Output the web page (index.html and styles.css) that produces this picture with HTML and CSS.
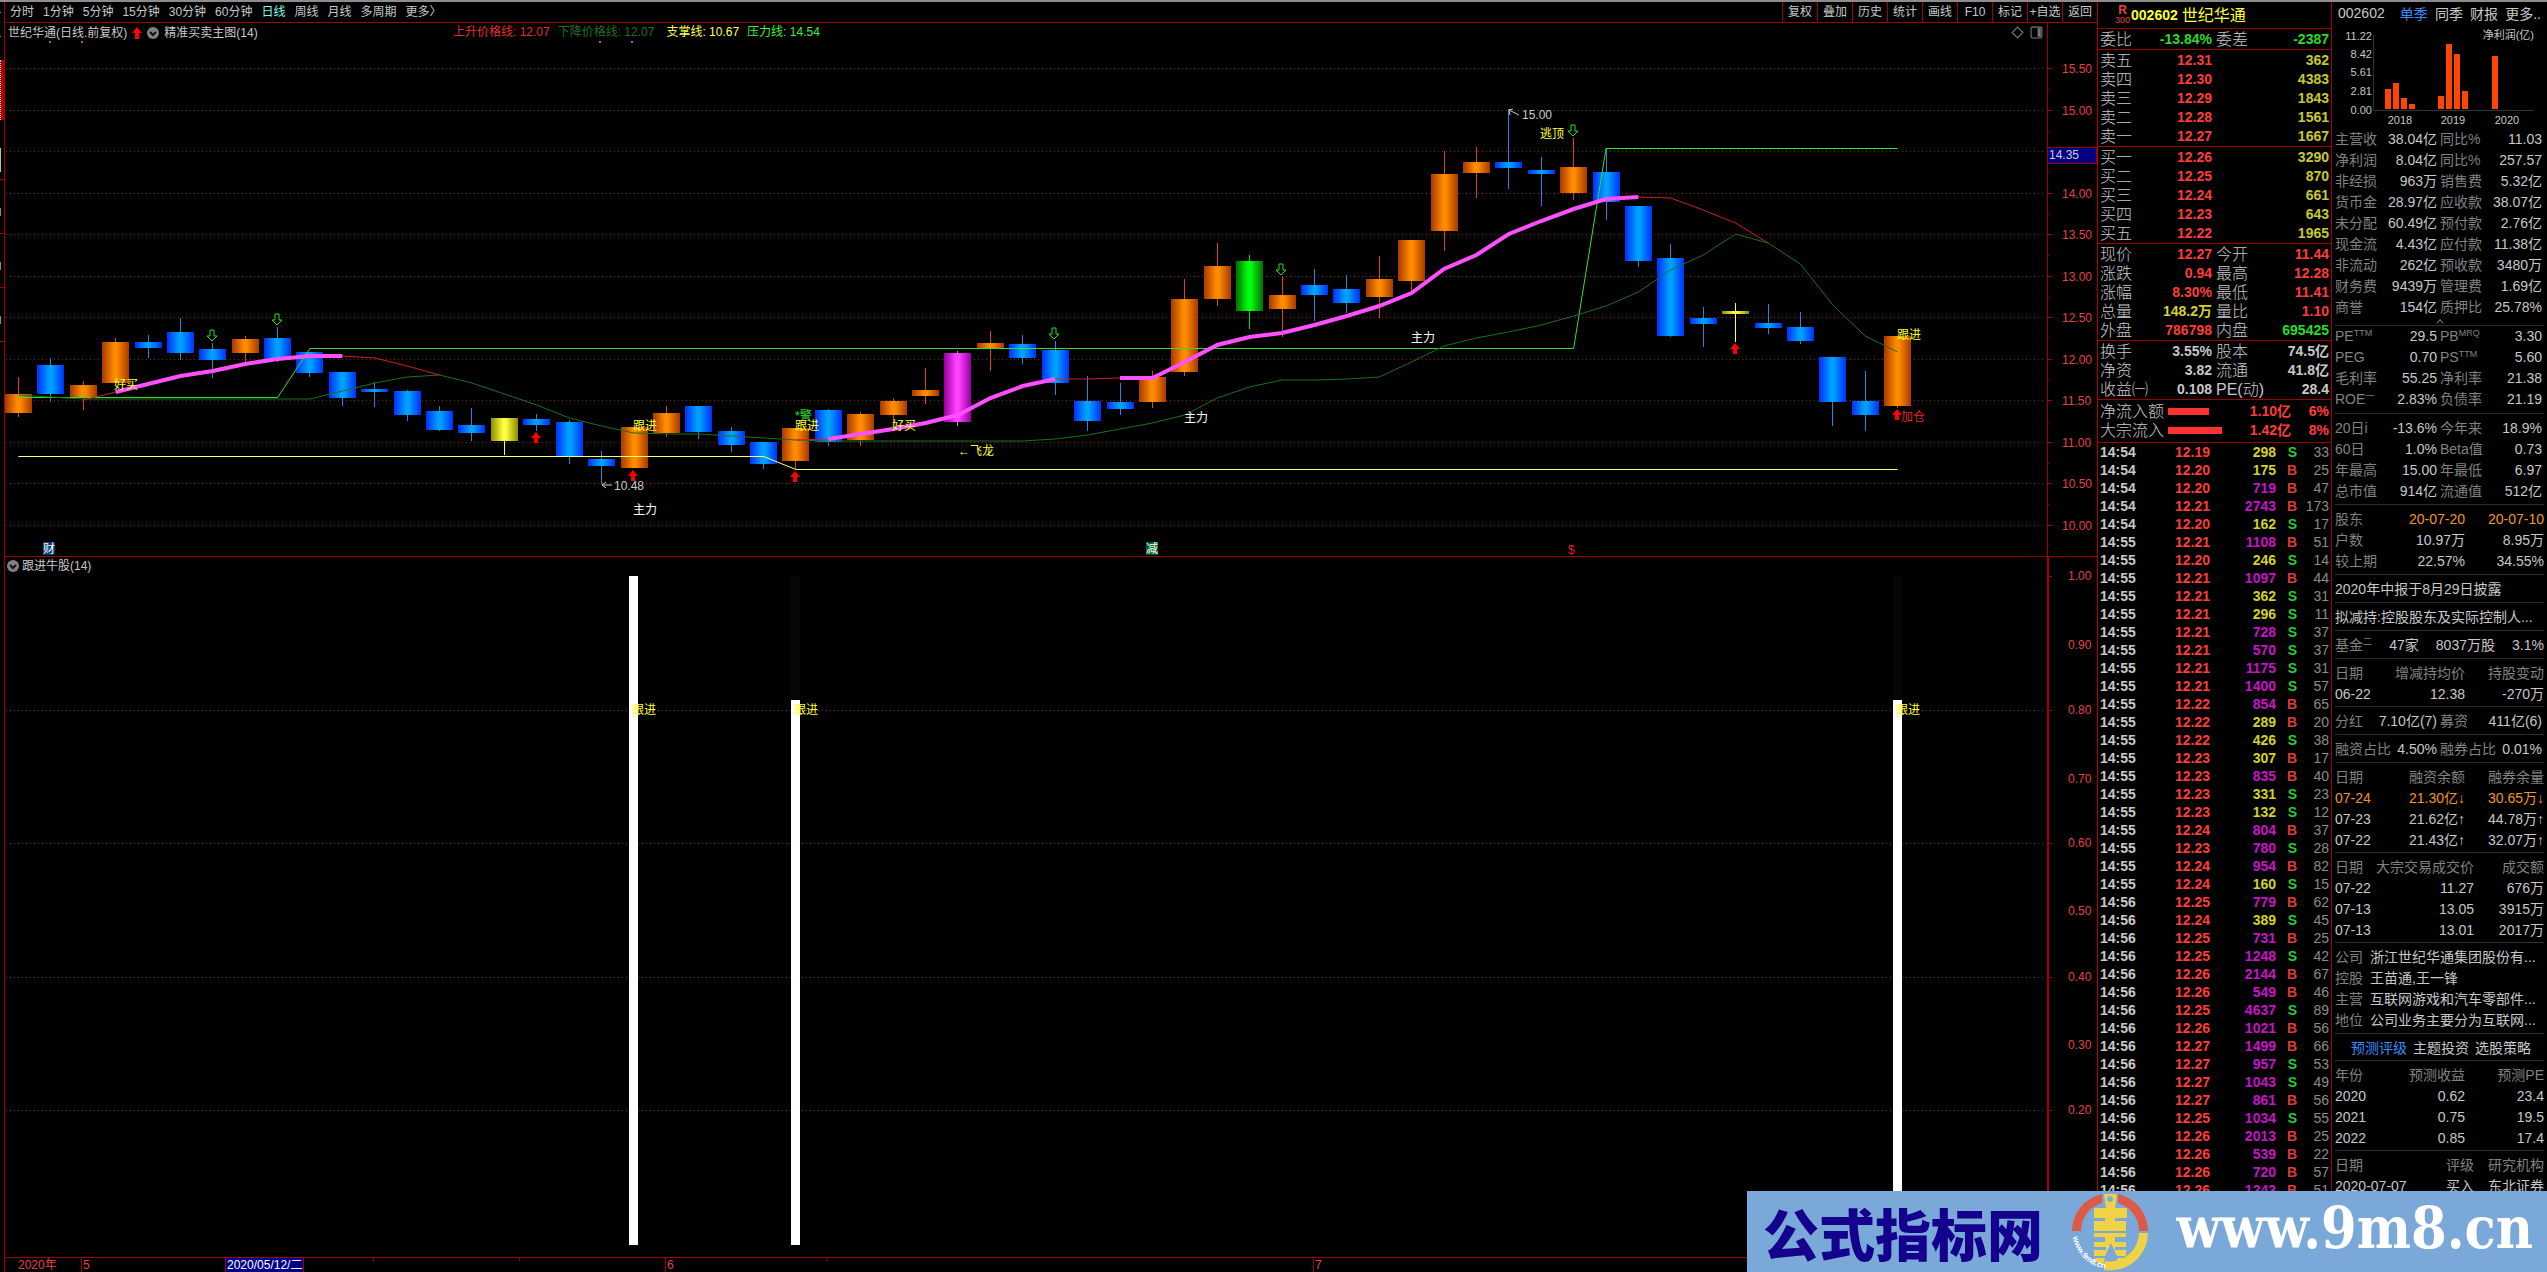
FILE: index.html
```html
<!DOCTYPE html>
<html lang="zh-CN">
<head>
<meta charset="utf-8">
<title>世纪华通 002602 日线</title>
<link rel="stylesheet" href="styles.css">
</head>
<body>
<div class="window-edge"></div>
<main class="workspace">
  <aside class="side-strip" aria-hidden="true">
    <div class="strip-gap"></div>
    <div class="strip-active"></div>
    <div class="strip-mark"></div>
    <div class="strip-cell"></div>
    <div class="strip-cell"></div>
    <div class="strip-cell"></div>
  </aside>

  <section class="charts">
    <nav class="toolbar">
      <div class="periods">
        <button>分时</button><button>1分钟</button><button>5分钟</button><button>15分钟</button><button>30分钟</button><button>60分钟</button><button class="active">日线</button><button>周线</button><button>月线</button><button>多周期</button><button>更多〉</button>
      </div>
      <div class="tools">
        <button>复权</button><button>叠加</button><button>历史</button><button>统计</button><button>画线</button><button>F10</button><button>标记</button><button>+自选</button><button>返回</button>
      </div>
    </nav>

    <div class="legend">
      <div class="legend-name">
        <span>世纪华通(日线.前复权)</span>
        <svg class="icon-up" viewBox="0 0 10 12"><path d="M5 0 10 6H7v6H3V6H0z"/></svg>
        <svg class="icon-drop" viewBox="0 0 12 12"><circle cx="6" cy="6" r="6"/><path d="M3 5l3 3 3-3"/></svg>
        <span>精准买卖主图(14)</span>
      </div>
      <div class="legend-values">
        <span class="c-rise">上升价格线: 12.07</span>
        <span class="c-fall">下降价格线: 12.07</span>
        <span class="c-support">支掌线: 10.67</span>
        <span class="c-press">压力线: 14.54</span>
      </div>
      <div class="legend-icons">
        <svg viewBox="0 0 12 12"><path d="M6 1l5 5-5 5-5-5z"/></svg>
        <svg viewBox="0 0 12 12"><rect x="1" y="1" width="10" height="10" rx="1"/><path class="solid" d="M7 2h3v8H7z"/></svg>
      </div>
      <div class="legend-axis"></div>
    </div>
    <svg id="price-chart" class="plot" viewBox="5 42 2092 515" role="img" aria-label="日线K线图"></svg>

    <div class="legend sub">
      <div class="legend-name">
        <svg class="icon-drop" viewBox="0 0 12 12"><circle cx="6" cy="6" r="6"/><path d="M3 5l3 3 3-3"/></svg>
        <span>跟进牛股(14)</span>
      </div>
      <div class="legend-axis"></div>
    </div>
    <svg id="signal-chart" class="plot" viewBox="5 575 2092 697" role="img" aria-label="跟进牛股指标"></svg>
  </section>

  <section class="quote">
    <header class="quote-head">
      <span class="badge"><b>R</b><i>300</i></span>
      <b>002602</b>
      <span>世纪华通</span>
    </header>
    <dl class="block two">
      <div><dt>委比</dt><dd class="green">-13.84%</dd></div><div><dt>委差</dt><dd class="green">-2387</dd></div>
    </dl>
    <table class="block book">
      <tr><th>卖五</th><td class="red">12.31</td><td>362</td></tr>
      <tr><th>卖四</th><td class="red">12.30</td><td>4383</td></tr>
      <tr><th>卖三</th><td class="red">12.29</td><td>1843</td></tr>
      <tr><th>卖二</th><td class="red">12.28</td><td>1561</td></tr>
      <tr><th>卖一</th><td class="red">12.27</td><td>1667</td></tr>
    </table>
    <table class="block book">
      <tr><th>买一</th><td class="red">12.26</td><td>3290</td></tr>
      <tr><th>买二</th><td class="red">12.25</td><td>870</td></tr>
      <tr><th>买三</th><td class="red">12.24</td><td>661</td></tr>
      <tr><th>买四</th><td class="red">12.23</td><td>643</td></tr>
      <tr><th>买五</th><td class="red">12.22</td><td>1965</td></tr>
    </table>
    <dl class="block two">
      <div><dt>现价</dt><dd class="red">12.27</dd></div><div><dt>今开</dt><dd class="red">11.44</dd></div>
      <div><dt>涨跌</dt><dd class="red">0.94</dd></div><div><dt>最高</dt><dd class="red">12.28</dd></div>
      <div><dt>涨幅</dt><dd class="red">8.30%</dd></div><div><dt>最低</dt><dd class="red">11.41</dd></div>
      <div><dt>总量</dt><dd class="yellow">148.2万</dd></div><div><dt>量比</dt><dd class="red">1.10</dd></div>
      <div><dt>外盘</dt><dd class="red">786798</dd></div><div><dt>内盘</dt><dd class="green">695425</dd></div>
    </dl>
    <dl class="block two">
      <div><dt>换手</dt><dd>3.55%</dd></div><div><dt>股本</dt><dd>74.5亿</dd></div>
      <div><dt>净资</dt><dd>3.82</dd></div><div><dt>流通</dt><dd>41.8亿</dd></div>
      <div><dt>收益㈠</dt><dd>0.108</dd></div><div><dt>PE(动)</dt><dd>28.4</dd></div>
    </dl>
    <div class="block flows">
      <div><span>净流入额</span><i class="bar short"></i><b>1.10亿</b><b>6%</b></div>
      <div><span>大宗流入</span><i class="bar long"></i><b>1.42亿</b><b>8%</b></div>
    </div>
    <table class="ticks"><tbody id="ticks"></tbody></table>
  </section>

  <section class="finance">
    <nav class="fin-head">
      <span>002602</span>
      <button class="active">单季</button><button>同季</button><button>财报</button><button>更多..</button>
    </nav>
    <svg class="profit" viewBox="0 0 215 102" role="img" aria-label="净利润(亿)">
      <g class="lab end"><text x="40" y="15">11.22</text><text x="40" y="33">8.42</text><text x="40" y="51">5.61</text><text x="40" y="70">2.81</text><text x="40" y="89">0.00</text><text x="202" y="14">净利润(亿)</text></g>
      <path class="axis" d="M41.500 10V85.500H202"/>
      <g class="cols"><rect x="53" y="64" width="6" height="20"/><rect x="61" y="58" width="6" height="26"/><rect x="69" y="73" width="6" height="11"/><rect x="77" y="79" width="6" height="5"/><rect x="106" y="71" width="6" height="13"/><rect x="114" y="19" width="6" height="65"/><rect x="122" y="29" width="6" height="55"/><rect x="130" y="66" width="6" height="18"/><rect x="160" y="31" width="6" height="53"/></g>
      <g class="lab mid"><text x="68" y="99">2018</text><text x="121" y="99">2019</text><text x="175" y="99">2020</text></g>
    </svg>
    <dl class="sec pairs first">
      <div><dt>主营收</dt><dd>38.04亿</dd></div><div><dt>同比%</dt><dd>11.03</dd></div>
      <div><dt>净利润</dt><dd>8.04亿</dd></div><div><dt>同比%</dt><dd>257.57</dd></div>
      <div><dt>非经损</dt><dd>963万</dd></div><div><dt>销售费</dt><dd>5.32亿</dd></div>
      <div><dt>货币金</dt><dd>28.97亿</dd></div><div><dt>应收款</dt><dd>38.07亿</dd></div>
      <div><dt>未分配</dt><dd>60.49亿</dd></div><div><dt>预付款</dt><dd>2.76亿</dd></div>
      <div><dt>现金流</dt><dd>4.43亿</dd></div><div><dt>应付款</dt><dd>11.38亿</dd></div>
      <div><dt>非流动</dt><dd>262亿</dd></div><div><dt>预收款</dt><dd>3480万</dd></div>
      <div><dt>财务费</dt><dd>9439万</dd></div><div><dt>管理费</dt><dd>1.69亿</dd></div>
      <div><dt>商誉</dt><dd>154亿</dd></div><div><dt>质押比</dt><dd>25.78%</dd></div>
    </dl>
    <svg class="caret" viewBox="0 0 8 6"><path d="M1 5l3-4 3 4"/></svg>
    <dl class="sec pairs ratios">
      <div><dt>PE<sup>TTM</sup></dt><dd>29.5</dd></div><div><dt>PB<sup>MRQ</sup></dt><dd>3.30</dd></div>
      <div><dt>PEG</dt><dd>0.70</dd></div><div><dt>PS<sup>TTM</sup></dt><dd>5.60</dd></div>
      <div><dt>毛利率</dt><dd>55.25</dd></div><div><dt>净利率</dt><dd>21.38</dd></div>
      <div><dt>ROE<sup>一</sup></dt><dd>2.83%</dd></div><div><dt>负债率</dt><dd>21.19</dd></div>
    </dl>
    <dl class="sec pairs">
      <div><dt>20日i</dt><dd>-13.6%</dd></div><div><dt>今年来</dt><dd>18.9%</dd></div>
      <div><dt>60日</dt><dd>1.0%</dd></div><div><dt>Beta值</dt><dd>0.73</dd></div>
      <div><dt>年最高</dt><dd>15.00</dd></div><div><dt>年最低</dt><dd>6.97</dd></div>
      <div><dt>总市值</dt><dd>914亿</dd></div><div><dt>流通值</dt><dd>512亿</dd></div>
    </dl>
    <div class="sec"><table>
      <tr class="orange"><th>股东</th><td>20-07-20</td><td>20-07-10</td></tr>
      <tr><th>户数</th><td>10.97万</td><td>8.95万</td></tr>
      <tr><th>较上期</th><td>22.57%</td><td>34.55%</td></tr>
    </table></div>
    <p class="sec">2020年中报于8月29日披露</p>
    <p class="sec">拟减持:控股股东及实际控制人...</p>
    <p class="sec fund"><span class="dim">基金<sup>二</sup></span><span>47家</span><span>8037万股</span><span>3.1%</span></p>
    <div class="sec tight"><table>
      <tr class="dim"><td>日期</td><td>增减持均价</td><td>持股变动</td></tr>
      <tr><td>06-22</td><td>12.38</td><td>-270万</td></tr>
    </table></div>
    <dl class="sec pairs"><div><dt>分红</dt><dd>7.10亿(7)</dd></div><div><dt>募资</dt><dd>411亿(6)</dd></div></dl>
    <dl class="sec pairs"><div><dt>融资占比</dt><dd>4.50%</dd></div><div><dt>融券占比</dt><dd>0.01%</dd></div></dl>
    <div class="sec tight"><table>
      <tr class="dim"><td>日期</td><td>融资余额</td><td>融券余量</td></tr>
      <tr class="orange"><td>07-24</td><td>21.30亿↓</td><td>30.65万↓</td></tr>
      <tr><td>07-23</td><td>21.62亿↑</td><td>44.78万↑</td></tr>
      <tr><td>07-22</td><td>21.43亿↑</td><td>32.07万↑</td></tr>
    </table></div>
    <div class="sec tight"><table class="wide">
      <tr class="dim"><td>日期</td><td>大宗交易成交价</td><td>成交额</td></tr>
      <tr><td>07-22</td><td>11.27</td><td>676万</td></tr>
      <tr><td>07-13</td><td>13.05</td><td>3915万</td></tr>
      <tr><td>07-13</td><td>13.01</td><td>2017万</td></tr>
    </table></div>
    <dl class="sec about">
      <div><dt>公司</dt><dd>浙江世纪华通集团股份有...</dd></div>
      <div><dt>控股</dt><dd>王苗通,王一锋</dd></div>
      <div><dt>主营</dt><dd>互联网游戏和汽车零部件...</dd></div>
      <div><dt>地位</dt><dd>公司业务主要分为互联网...</dd></div>
    </dl>
    <nav class="sec tight tabs"><button class="active">预测评级</button><button>主题投资</button><button>选股策略</button></nav>
    <div class="sec tight"><table>
      <tr class="dim"><td>年份</td><td>预测收益</td><td>预测PE</td></tr>
      <tr><td>2020</td><td>0.62</td><td>23.4</td></tr>
      <tr><td>2021</td><td>0.75</td><td>19.5</td></tr>
      <tr><td>2022</td><td>0.85</td><td>17.4</td></tr>
    </table></div>
    <div class="sec tight"><table class="wide">
      <tr class="dim"><td>日期</td><td>评级</td><td>研究机构</td></tr>
      <tr><td>2020-07-07</td><td>买入</td><td>东北证券</td></tr>
    </table></div>
  </section>
</main>

<div class="banner">
  <span class="banner-name">公式指标网</span>
  <svg class="banner-logo" viewBox="0 0 78 78">
    <path class="r" d="M1 38A38 38 0 0 1 31 1v9A29 29 0 0 0 10 38zM47 1a38 38 0 0 1 30 37h-9A29 29 0 0 0 47 10z"/>
    <path class="y" d="M77 40A38 38 0 0 1 33 77l1-9A29 29 0 0 0 68 40z"/>
    <path class="y" fill-rule="evenodd" d="M33 1h13l-2 14h12v10H44v3h11v10H23V28h11v-3H23V15h12zM39 3a3 3 0 1 0 .1 0zM23 40h32v4H44v5h11v5H44v3h11v6h-9l-6-13-6 13h-11v-6h12v-3H23v-5h11v-5H23zM25 65h9l-2 7-9-4zM46 65h8v5l-7 2z"/>
    <path id="logo-arc" class="arc" d="M2 44A37 37 0 0 0 32 75"/>
    <text><textPath href="#logo-arc">www.9m8.cn</textPath></text>
  </svg>
  <a class="banner-link" href="#">www.9m8.cn</a>
</div>
<script src="chart.js"></script>
</body>
</html>
```
FILE: styles.css
```css
* { box-sizing: border-box; }
body {
  margin: 0;
  height: 100vh;
  overflow: hidden;
  background: #000;
  color: #c8c8c8;
  font: 12px/18px "Liberation Sans", "Noto Sans CJK SC", sans-serif;
  display: flex;
  flex-direction: column;
}
button {
  padding: 0;
  border: 0;
  background: none;
  color: inherit;
  font: inherit;
  white-space: nowrap;
}
dl, dd, p { margin: 0; }
table { border-collapse: collapse; }
th, td { padding: 0; font-weight: inherit; text-align: right; }
th:first-child, td:first-child { text-align: left; }

.window-edge { height: 2px; flex: none; background: #8c8c8c; }
.workspace {
  flex: 1;
  min-height: 0;
  display: grid;
  grid-template-columns: 4px minmax(0, 1fr) 235px 215px;
}

/* edge of the collapsed side menu */
.side-strip { display: flex; flex-direction: column; }
.strip-gap { height: 58px; background: repeating-linear-gradient(#000 0 10px, #999 10px 11px, #000 11px 24px); width: 1px; }
.strip-active { height: 60px; background: #b40000; border-left: 1px dotted #ddd; }
.strip-mark { height: 60px; border-bottom: 1px solid #900; background: linear-gradient(#bbb, #bbb) 0 28px / 1px 24px no-repeat; }
.strip-cell { height: 54px; border-bottom: 1px solid #900; background: linear-gradient(#888, #888) 0 28px / 1px 8px no-repeat; }

/* charts */
.charts { min-width: 0; display: flex; flex-direction: column; border-left: 1px solid #a00000; }
.toolbar {
  height: 21px;
  display: flex;
  justify-content: space-between;
  border-bottom: 1px solid #a00000;
}
.periods { display: flex; gap: 9px; padding-left: 5px; }
.periods .active { color: #7fffe8; }
.tools { display: flex; }
.tools button { width: 35px; border-left: 1px solid #a00000; }
.legend { height: 19px; display: flex; }
.legend.sub { height: 18px; }
.legend-name { width: 448px; display: flex; align-items: center; gap: 5px; padding-left: 3px; }
.sub .legend-name { gap: 3px; padding-left: 2px; }
.legend-values { flex: 1; display: flex; gap: 8px; }
.legend-values .c-fall { margin-right: 4px; }
.c-rise { color: #e03030; }
.c-fall { color: #207020; }
.c-support { color: #ffff50; }
.c-press { color: #40f040; }
.legend-icons { display: flex; align-items: center; gap: 6px; padding-right: 4px; }
.legend-icons svg { width: 13px; height: 13px; fill: none; stroke: #777; }
.legend-icons .solid { fill: #777; stroke: none; }
.legend-axis { width: 50px; border-left: 1px solid #a00000; margin-left: auto; }
.sub .legend-axis { border-left-width: 2px; }
.icon-up { width: 10px; height: 12px; fill: #f00; }
.icon-drop { width: 12px; height: 12px; fill: #808080; }
.icon-drop path { fill: none; stroke: #111; stroke-width: 2; }
.plot { display: block; width: 100%; flex: none; overflow: visible; }
.plot text { font-size: 12px; fill: #fff; }
.plot .frame { fill: none; stroke: #a00000; }
.plot .frame.heavy { stroke-width: 2; }
.plot .grid { stroke: #8c2020; stroke-dasharray: 1 3; }
.plot .scale { fill: #e04444; }
.plot .date { fill: #e04444; }
.plot .cursor { fill: #000084; stroke: #a00000; }
.plot .pale { fill: #ccc; }
.plot .gold { fill: #ffff30; }
.plot .lime { fill: #30e030; }
.plot .blood { fill: #e02020; }
.plot .line { fill: none; }
.plot .pink { stroke: #ff50ff; stroke-width: 4; }
.plot .thin-red { stroke: #d02020; }
.plot .dark-green { stroke: #1c701c; }
.plot .bright-green { stroke: #30e030; }
.plot .yellow-line { stroke: #ffff70; }
.plot .down { fill: none; stroke: #28dc28; }
.plot .up { fill: #f00; }
.plot .pointer { fill: none; stroke: #ccc; }
.plot .tag-blue { fill: #003c70; }
.plot .tag-green { fill: #006420; }
.plot .dot { fill: #c040c0; }
.plot .signal { fill: #fff; }
.plot .ghost { fill: #060606; }

/* quote panel */
.quote {
  border-left: 1px solid #b00000;
  border-right: 1px solid #a00000;
  overflow: hidden;
  font-size: 14px;
  line-height: 19px;
}
.quote-head {
  height: 27px;
  border-bottom: 1px solid #a00000;
  display: flex;
  align-items: center;
  gap: 4px;
  padding-left: 17px;
  color: #ffff30;
}
.quote-head > span:last-child { font-size: 16px; }
.badge { display: flex; flex-direction: column; align-items: center; color: #e04444; font-size: 9px; line-height: 10px; margin-right: -3px; }
.badge b { font-size: 12px; }
.badge i { font-style: normal; }
.block { width: 100%; padding: 1px 2px 0; border-bottom: 1px solid #a00000; border-collapse: separate; border-spacing: 0; }
.two { display: grid; grid-template-columns: 112px 1fr; column-gap: 4px; }
.two div { display: flex; justify-content: space-between; height: 19px; }
.two dt, .book th, .flows span { font-size: 16px; font-weight: 300; }
.two dd { font-weight: bold; }
.book { table-layout: fixed; }
.book tr { height: 19px; }
.book td { font-weight: bold; color: #c8c832; }
.book th { width: 34px; }
.book td:nth-child(2) { width: 78px; }
.quote .red { color: #ff3c3c; }
.quote .green { color: #28dc28; }
.quote .yellow { color: #d2d228; }
.flows { padding: 2px; color: #ff3c3c; }
.flows div { display: grid; grid-template-columns: 68px 1fr 56px 38px; align-items: center; text-align: right; height: 19px; }
.flows span { color: #c8c8c8; text-align: left; }
.bar { display: block; height: 7px; background: #ff3232; }
.bar.short { width: 41px; }
.bar.long { width: 54px; }
.ticks { width: 229px; table-layout: fixed; margin-left: 2px; font-weight: bold; line-height: 18px; }
.ticks tr { height: 18px; }
.ticks .time { width: 42px; }
.ticks .price { width: 68px; color: #ff3c3c; }
.ticks .vol { width: 66px; color: #d2d228; }
.ticks .vol.big { color: #c814c8; }
.ticks .side { width: 21px; }
.ticks .side.s { color: #28c83c; }
.ticks .side.b { color: #dc3c3c; }
.ticks .count { color: #8c8c8c; font-weight: normal; }

/* finance panel */
.finance { font-size: 14px; line-height: 21px; color: #c8c8c8; overflow: hidden; padding: 0 3px; }
.fin-head { display: flex; justify-content: space-between; height: 23px; line-height: 22px; padding: 0 3px; }
.fin-head span { margin-right: 8px; }
.finance button.active { color: #3c8cff; }
.profit { display: block; width: calc(100% + 6px); margin: 0 -3px; }
.profit text { font-size: 11px; fill: #c8c8c8; }
.profit .end { text-anchor: end; }
.profit .mid { text-anchor: middle; }
.profit .axis { fill: none; stroke: #333; }
.profit .cols { fill: #ff4600; }
.sec { border-bottom: 1px solid #2d2d2d; padding: 4px 0 2px; white-space: nowrap; }
.sec.tight { padding-bottom: 1px; }
.sec.first { padding: 2px 2px 0 0; border: 0; }
.sec.ratios { padding-top: 0; padding-bottom: 3px; border-top: 1px solid #2d2d2d; }
.pairs { display: grid; grid-template-columns: 1fr 1fr; column-gap: 3px; padding-right: 2px; }
.pairs div { display: flex; justify-content: space-between; height: 21px; min-width: 0; }
.dim, .finance dt, .finance th { color: #828282; }
.finance sup { font-size: 9px; line-height: 9px; vertical-align: 5px; }
.finance table { width: 100%; table-layout: fixed; }
.finance tr { height: 21px; }
.finance td:nth-child(1), .finance th:nth-child(1) { width: 50px; }
.finance td:nth-child(2) { width: 80px; }
.finance .wide td:nth-child(1) { width: 36px; }
.finance .wide td:nth-child(2) { width: 103px; }
.finance .orange td { color: #f09628; }
.caret { display: block; width: 8px; height: 7px; margin: 0 auto; fill: none; stroke: #999; }
.fund { display: flex; justify-content: space-between; }
.about div { display: flex; gap: 7px; }
.tabs { display: flex; justify-content: center; gap: 6px; padding-left: 3px; }

/* site banner */
.banner {
  position: absolute;
  right: 0;
  bottom: 0;
  width: 800px;
  height: 81px;
  padding: 0 14px 0 16px;
  background: #7aa8d8;
  display: flex;
  align-items: center;
  justify-content: space-between;
  white-space: nowrap;
}
.banner-name { color: #14008c; font: 900 56px/78px "Noto Sans CJK SC", sans-serif; }
.banner-logo { width: 78px; height: 78px; }
.banner-logo .r { fill: #dc5a46; }
.banner-logo .y { fill: #f0d246; }
.banner-logo .arc { fill: none; }
.banner-logo text { font-size: 8px; font-weight: bold; fill: #fff; }
.banner-link { color: #fff; text-decoration: none; font: bold 57px/78px "DejaVu Serif Condensed", "DejaVu Serif", serif; margin-top: -8px; }
```
FILE: chart.js
```js
const FIRST = 18.4, STEP = 32.4;
const cx = n => FIRST + STEP * n;

// colour, body top, body bottom, wick top, wick bottom
const candles = `o 394 413 377 417|b 365 394 358 402|o 385 397 381 410|o 342 383 338 383|b 342 348 335 358|b 332 353 318 360|b 349 360 343 378|o 339 353 336 362|b 338 360 327 362|b 352 373 352 377|b 372 398 372 406|b 389 392 382 407|b 391 415 390 421|b 411 430 406 431|b 425 433 408 441|y 418 441 418 455|b 419 425 414 431|b 422 456 420 464|b 459 466 451 484|o 427 468 427 468|o 413 433 406 437|b 406 432 406 439|b 431 445 427 452|b 442 464 442 469|o 428 461 428 469|b 410 442 409 446|o 414 440 412 446|o 401 415 398 422|o 390 396 368 404|m 353 422 351 426|o 343 348 331 371|b 344 358 335 364|b 350 383 341 395|b 401 421 376 431|b 402 409 383 415|o 377 402 371 408|o 299 372 279 376|o 266 299 243 306|g 261 311 255 329|o 295 309 277 337|b 285 295 269 321|b 289 303 275 313|o 279 297 256 318|o 240 281 240 295|o 174 231 151 251|o 162 173 147 198|b 162 168 109 189|b 170 174 157 206|o 167 193 138 200|b 172 202 149 220|b 206 261 206 267|b 258 336 244 337|b 318 324 307 347|y 311 314 303 342|b 323 328 304 334|b 327 341 312 344|b 357 402 357 426|b 401 415 371 431|o 336 406 336 408`
  .split('|').map(s => s.split(' '));

const hues = {
  o: ['#a83800', '#ff8c00', '#e03c28'],
  b: ['#0030ff', '#00a0ff', '#2884e0'],
  y: ['#8c8c00', '#ffff40', '#ffff40'],
  m: ['#9600a0', '#ff40ff', '#ff60ff'],
  g: ['#007000', '#00ff10', '#00e010']
};

// indicator lines: class, first candle, y per candle
const lines = [
  ['dark-green', 0, [395, 397, 399, 399, 399, 399, 399, 399, 399, 399, 391, 383, 377, 375, 383, 394, 405, 418, 426, 433, 434, 434, 436, 438, 440, 441, 441, 441, 441, 441, 441, 441, 439, 435, 429, 423, 415, 398, 387, 380, 380, 379, 377, 362, 346, 338, 332, 325, 316, 306, 292, 270, 255, 234, 243, 264, 305, 336, 352]],
  ['thin-red', 2, [400, 392]],
  ['thin-red', 10, [356, 358, 366, 375]],
  ['thin-red', 24, [440, 439]],
  ['thin-red', 32, [379, 379, 378]],
  ['thin-red', 50, [197, 198, 210, 223, 243]],
  ['pink', 3, [392, 384, 376, 371, 364, 359, 356, 356]],
  ['pink', 25, [439, 434, 429, 423, 415, 398, 386, 379]],
  ['pink', 34, [378, 378, 362, 345, 337, 333, 325, 316, 306, 293, 269, 255, 234, 221, 209, 199, 197]]
];
const steps = [
  ['bright-green', [[0, 397.5], [8, 397.5], [9, 348.5], [48, 348.5], [49, 148.5], [58, 148.5]]],
  ['yellow-line', [[0, 456.5], [23, 456.5], [24, 469.5], [58, 469.5]]]
];

const text = (x, y, cls, s) => `<text x="${x}" y="${y + 4}" class="${cls}">${s}</text>`;
const down = (x, y) => `<path class="down" d="M${x - 2} ${y}h4v6h3l-5 5-5-5h3z"/>`;
const up = (x, y) => `<path class="up" d="M${x} ${y}l5 6h-3v5h-4v-5h-3z"/>`;

function priceChart() {
  let s = '<defs>';
  for (const k in hues) {
    const [edge, mid] = hues[k];
    s += `<linearGradient id="g-${k}"><stop offset="0" stop-color="${edge}"/><stop offset=".45" stop-color="${mid}"/><stop offset=".55" stop-color="${mid}"/><stop offset="1" stop-color="${edge}"/></linearGradient>`;
  }
  s += '</defs>';
  for (let i = 0; i < 12; i++) {
    const y = Math.round(68 + i * 41.5) + 0.5;
    s += `<path class="grid" d="M6 ${y}H2043"/><path class="frame" d="M2047 ${y}h5M2047 ${y + 21}h2"/>`;
    if (i !== 2) s += text(2062, y, 'scale', (15.5 - i / 2).toFixed(2));
  }
  candles.forEach(([k, t, b, hi, lo], n) => {
    const x = Math.floor(cx(n));
    s += `<path d="M${x + 0.5} ${hi}V${lo}" stroke="${hues[k][2]}"/><rect x="${x - 13}" y="${t}" width="27" height="${b - t}" fill="url(#g-${k})"/>`;
  });
  for (const [c, pts] of steps) s += `<polyline class="line ${c}" points="${pts.map(([n, y]) => cx(n) + ',' + y).join(' ')}"/>`;
  for (const [c, from, ys] of lines) s += `<polyline class="line ${c}" points="${ys.map((y, i) => cx(from + i) + ',' + y).join(' ')}"/>`;
  [[212, 330], [277, 314], [1054, 328], [1281, 264], [1573, 125]].forEach(p => s += down(...p));
  [[536, 432], [633, 470], [795, 471], [1735, 343], [1897, 409]].forEach(p => s += up(...p));
  s += text(114, 385, 'gold', '好买') + text(633, 426, 'gold', '跟进') + text(795, 416, 'lime', '*警')
    + text(795, 426, 'gold', '跟进') + text(614, 486, 'pale', '10.48') + text(633, 510, '', '主力')
    + text(892, 426, 'gold', '好买') + text(958, 451, 'gold', '←飞龙') + text(1184, 418, '', '主力')
    + text(1411, 338, '', '主力') + text(1540, 134, 'gold', '逃顶') + text(1522, 115, 'pale', '15.00')
    + text(1897, 335, 'gold', '跟进') + text(1901, 417, 'blood', '加仓') + text(1568, 550, 'blood', '$');
  s += '<path class="pointer" d="M602 485h10M602 485l4-3M602 485l4 3M1509 110l10 5M1509 110l4-1M1509 110l1 5"/>';
  s += '<rect class="tag-blue" x="43" y="542" width="12" height="13"/>' + text(43, 549, '', '财');
  s += '<rect class="tag-green" x="1146" y="542" width="12" height="13"/>' + text(1146, 549, '', '减');
  [50, 82, 600, 632].forEach(x => s += `<rect class="dot" x="${x - 1}" y="41" width="2" height="2"/>`);
  s += '<path class="frame" d="M2047.500 42V556M4 556.500H2097"/>';
  s += '<rect class="cursor" x="2047.500" y="147.500" width="49" height="16"/>' + text(2049, 155, 'pale', '14.35');
  document.getElementById('price-chart').innerHTML = s;
}

function signalChart() {
  let s = '';
  [[576, '1.00'], [645, '0.90'], [710, '0.80'], [779, '0.70'], [843, '0.60'], [911, '0.50'], [977, '0.40'], [1045, '0.30'], [1110, '0.20']].forEach(([y, label], i) => {
    if (i && i % 2 === 0) s += `<path class="grid" d="M6 ${y + 0.5}H2043"/>`;
    s += `<path class="frame" d="M2047 ${y + 0.5}h${i % 2 ? 2 : 5}"/>` + text(2068, y, 'scale', label);
  });
  s += '<rect class="ghost" x="791" y="576" width="9" height="124"/><rect class="ghost" x="1893" y="576" width="9" height="124"/>';
  s += '<rect class="signal" x="629" y="576" width="9" height="669"/><rect class="signal" x="791" y="700" width="9" height="545"/><rect class="signal" x="1893" y="700" width="9" height="545"/>';
  s += text(632, 710, 'gold', '跟进') + text(794, 710, 'gold', '跟进') + text(1896, 710, 'gold', '跟进');
  s += '<path class="frame heavy" d="M2048 575V1272"/><path class="frame" d="M4 1257.500H2097M81.500 1258v14M373.500 1258v3M519.500 1258v3M665.500 1258v14M827.500 1258v3M1313.500 1258v14"/>';
  s += '<rect class="cursor" x="225.500" y="1257.500" width="78" height="16"/>';
  s += text(18, 1265, 'date', '2020年') + text(83, 1265, 'date', '5') + text(227, 1265, '', '2020/05/12/二')
    + text(667, 1265, 'date', '6') + text(1315, 1265, 'date', '7');
  document.getElementById('signal-chart').innerHTML = s;
}

// minute, price, volume, side, deals
const trades = `54 19 298 S 33|54 20 175 B 25|54 20 719 B 47|54 21 2743 B 173|54 20 162 S 17|55 21 1108 B 51|55 20 246 S 14|55 21 1097 B 44|55 21 362 S 31|55 21 296 S 11|55 21 728 S 37|55 21 570 S 37|55 21 1175 S 31|55 21 1400 S 57|55 22 854 B 65|55 22 289 B 20|55 22 426 S 38|55 23 307 B 17|55 23 835 B 40|55 23 331 S 23|55 23 132 S 12|55 24 804 B 37|55 23 780 S 28|55 24 954 B 82|55 24 160 S 15|56 25 779 B 62|56 24 389 S 45|56 25 731 B 25|56 25 1248 S 42|56 26 2144 B 67|56 26 549 B 46|56 25 4637 S 89|56 26 1021 B 56|56 27 1499 B 66|56 27 957 S 53|56 27 1043 S 49|56 27 861 B 56|56 25 1034 S 55|56 26 2013 B 25|56 26 539 B 22|56 26 720 B 57|56 26 1243 B 51`;

document.getElementById('ticks').innerHTML = trades.split('|').map(row => {
  const [m, p, v, side, n] = row.split(' ');
  return `<tr><td class="time">14:${m}</td><td class="price">12.${p}</td><td class="vol${v >= 500 ? ' big' : ''}">${v}</td><td class="side ${side.toLowerCase()}">${side}</td><td class="count">${n}</td></tr>`;
}).join('');

priceChart();
signalChart();
```
